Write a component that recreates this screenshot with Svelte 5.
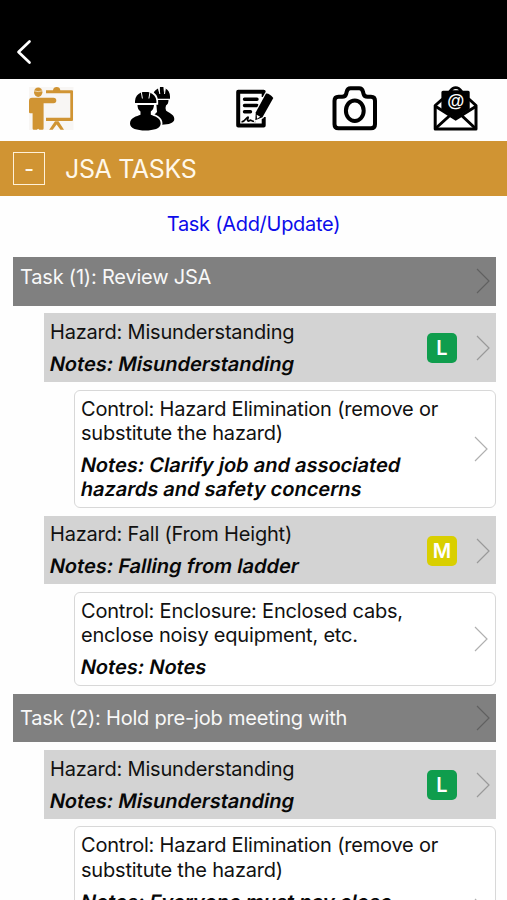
<script>
  const tasks = [
    {
      title: 'Task (1): Review JSA',
      middle: false,
      hazards: [
        {
          name: 'Hazard: Misunderstanding', notes: 'Notes: Misunderstanding', level: 'L',
          control: ['Control: Hazard Elimination (remove or', 'substitute the hazard)'],
          controlNotes: ['Notes: Clarify job and associated', 'hazards and safety concerns']
        },
        {
          name: 'Hazard: Fall (From Height)', notes: 'Notes: Falling from ladder', level: 'M',
          control: ['Control: Enclosure: Enclosed cabs,', 'enclose noisy equipment, etc.'],
          controlNotes: ['Notes: Notes']
        }
      ]
    },
    {
      title: 'Task (2): Hold pre-job meeting with',
      middle: true,
      hazards: [
        {
          name: 'Hazard: Misunderstanding', notes: 'Notes: Misunderstanding', level: 'L', tall: true,
          control: ['Control: Hazard Elimination (remove or', 'substitute the hazard)'],
          controlNotes: ['Notes: Everyone must pay close']
        }
      ]
    }
  ];
</script>

{#snippet chevron()}
  <svg class="chev" width="14" height="26" viewBox="0 0 14 26"><path d="M1 1L13 13L1 25" fill="none" stroke="currentColor" stroke-width="1.2" /></svg>
{/snippet}

<div class="app">
  <header>
    <svg width="16" height="26" viewBox="0 0 16 26"><path d="M13.5 2.5L2.5 13L13.5 23.5" fill="none" stroke="#fff" stroke-width="2.7" stroke-linecap="round" stroke-linejoin="round" /></svg>
  </header>

  <nav>
    <div class="tab">
      <svg width="48" height="48" viewBox="0 0 48 48">
        <rect x="2" y="2" width="44.500" height="43" fill="#f8f6f4" />
        <g fill="#d09433">
          <ellipse cx="11.200" cy="7.200" rx="4.200" ry="4.800" />
          <path d="M5 12.700H26.500a2.800 2.800 0 0 1 0 5.600H16.600V43.500q0 1.200-1.200 1.200H12.500l-1.400-1-1.300 1H6.800q-1.200 0-1.200-1.200V28.300H3.200q-1.200 0-1.200-1.200V16Q2 12.700 5 12.700Z" />
          <path d="M26 5.300q.5-3.300 3.700-3.300t3.600 3.300H45q1 0 1 1V35q0 1-1 1H19v-3.300h24.300V8.300H19v-3Z" />
          <path d="M28 36.300h3.500l5.500 8.400h-3.500l-3.900-5.200-3.900 5.200h-3.500Z" />
        </g>
        <path d="M7 5.800Q11.200 7.500 15.300 5.800" stroke="#f0dcb8" stroke-width=".9" fill="none" />
      </svg>
    </div>
    <div class="tab">
      <svg width="48" height="48" viewBox="0 0 48 48">
        <path d="M24.500 11.500Q25 6 30 3.500l1.300 5L32 2h3.400l.7 6.500 1.300-5q4.400 2 4.600 8v2.200H25Z" />
        <path d="M28 15h12.500q0 4-2.500 5.500-1 2.500 0 5c2 2 8.300 3.500 8.300 8.500 0 4-5.500 5.700-12.300 5.700L26 30l3-3Z" />
        <g stroke="#fff" stroke-width="3.500" paint-order="stroke">
          <path d="M9.500 20H26q-.3 4.500-3.200 6.500v3.300c3.500 1.500 9.900 2.800 9.900 8.700 0 5-7 7-15.300 7S2 43.500 2 38.500c0-5.900 7-7.200 10.500-8.700v-3.300Q9.500 24.500 9.500 20Z" />
          <path d="M7 18v-2.200q.5-6 6-8.300L15 7h5l1.800.5q6 2.300 6.600 8.300V18Z" />
        </g>
        <path d="M7 19.200h21" stroke="#fff" stroke-width="1.500" />
        <path d="M13.300 7l1.100 6.500M22 7l-1.100 6.500M31 3.500l.8 5.500M37.300 3.500l-.8 5.500" stroke="#fff" stroke-width="1" />
      </svg>
    </div>
    <div class="tab">
      <svg width="48" height="48" viewBox="0 0 48 48" fill="none" stroke="#000">
        <path d="M33.700 12V6.800H8.200v33.800h25.500V32" stroke-width="4" stroke-linejoin="round" />
        <path d="M14.500 14.200h12.500M14.500 20.500h12.500M14.500 26.800h6" stroke-width="3.400" stroke-linecap="round" />
        <path d="M11.500 37c4-.5 5.500-5.500 6.500-5s-1.500 3.500 0 4 2-1.500 3-.7 2 1.200 4.500 1.200" stroke-width="1.700" />
        <path d="M25.300 35.300l.5-8L36 8.500q3.500-.5 7.300 4.500L32.500 32.300Z" fill="#000" stroke="#fff" stroke-width="2.400" paint-order="stroke" />
        <path d="M26.700 29.800l3.500 2-3.200 1.900Z" fill="#fff" stroke="none" />
      </svg>
    </div>
    <div class="tab">
      <svg width="48" height="48" viewBox="0 0 48 48" fill="none" stroke="#000" stroke-width="4">
        <path d="M7.500 11.700h3.700q3.300 0 4-3l.5-2Q16.500 3.300 19.500 3.300h8.700q3 0 3.800 3.400l.5 2q.7 3 4 3h3.500q4 0 4 4v23.600q0 4-4 4H7.500q-4 0-4-4V15.700q0-4 4-4Z" />
        <ellipse cx="23.800" cy="25.700" rx="8.900" ry="10.300" />
      </svg>
    </div>
    <div class="tab">
      <svg width="48" height="48" viewBox="0 0 48 48">
        <path d="M3.200 20.500L9.400 15 24 6l14 9 6 5.500V44H3.200Z" fill="#fff" stroke="#000" stroke-width="3" stroke-linejoin="round" />
        <path d="M4 43L19.500 29M43 43L28 29" stroke="#000" stroke-width="3" />
        <path d="M3 21L23.700 34 44.500 21" fill="none" stroke="#000" stroke-width="3" />
        <path d="M11 5.700h5.500q3.500-4.400 7.200-4.400t7.200 4.400h5.300q1.500 0 1.500 1.500V24L23.700 33 9.400 24V7.200q0-1.500 1.600-1.500Z" />
        <path d="M20.500 5.200q3.500-2.400 6.500 0Z" fill="#fff" />
        <text x="23.700" y="22" text-anchor="middle" class="at">@</text>
      </svg>
    </div>
  </nav>

  <div class="section">
    <span class="toggle">-</span>
    <h1>JSA TASKS</h1>
  </div>

  <div class="add"><span>Task (Add/Update)</span></div>

  <main>
    {#each tasks as task}
      <div class="task" class:middle={task.middle}>
        <span>{task.title}</span>
        {@render chevron()}
      </div>
      {#each task.hazards as h}
        <div class="hazard">
          <div class="copy">
            <p><span>{h.name}</span></p>
            <p class="notes"><span class="line">{h.notes}</span></p>
          </div>
          <b class="badge" class:medium={h.level === 'M'}>{h.level}</b>
          {@render chevron()}
        </div>
        <div class="control" class:tall={h.tall}>
          <div class="copy">
            <p>{#each h.control as line}<span class="line">{line}</span>{/each}</p>
            <p class="notes">{#each h.controlNotes as line}<span class="line">{line}</span>{/each}</p>
          </div>
          {@render chevron()}
        </div>
      {/each}
    {/each}
  </main>
</div>

<style>
  .app {
    width: 507px;
    height: 900px;
    overflow: hidden;
    background: #fefefe;
    color: #111;
    font-family: Inter, "Liberation Sans", sans-serif;
    font-size: 20px;
    line-height: 24.4px;
    letter-spacing: -0.2px;
  }
  header {
    box-sizing: border-box;
    height: 79px;
    padding: 39px 0 0 16px;
    background: #000;
  }
  header svg, .tab svg, .chev { display: block; flex: none; }
  nav {
    display: flex;
    height: 62px;
    background: #fefefe;
  }
  .tab {
    flex: 1;
    display: flex;
    justify-content: center;
    padding-top: 6px;
  }
  .at {
    font: bold 17.500px "Liberation Sans", sans-serif;
    fill: #fff;
    letter-spacing: 0;
  }
  .section {
    display: flex;
    align-items: center;
    height: 55px;
    padding-left: 13px;
    gap: 20px;
    background: #d09433;
    color: #fff8ea;
  }
  .toggle {
    box-sizing: border-box;
    width: 32px;
    height: 33px;
    border: 1.5px solid #fff1d8;
    text-align: center;
    font-size: 21px;
    font-weight: 500;
    line-height: 32px;
  }
  h1 {
    margin: 0;
    padding-top: 2px;
    font-size: 25px;
    font-weight: 400;
    letter-spacing: -0.35px;
  }
  .add {
    height: 61px;
    line-height: 56px;
    text-align: center;
    color: #0c0cea;
    letter-spacing: -0.28px;
  }
  main {
    display: flex;
    flex-direction: column;
    gap: 7.700px;
    padding: 0 11px 0 13px;
  }
  .task, .hazard, .control {
    box-sizing: border-box;
    flex: none;
    display: flex;
    align-items: center;
  }
  .task {
    height: 48.700px;
    padding: 0 6px 0 7px;
    justify-content: space-between;
    background: #808080;
    color: #f8f8f8;
  }
  .task > span { padding-bottom: 9px; }
  .task.middle > span { padding-bottom: 0; }
  .task .chev { color: #606060; }
  .hazard {
    height: 68.600px;
    margin-left: 31px;
    padding: 1px 6px 0;
    background: #d3d3d3;
  }
  .copy { flex: 1; }
  p { margin: 0; white-space: nowrap; }
  .notes {
    margin-top: 7.600px;
    color: #080808;
    font-weight: 600;
  }
  .line { display: table; }
  /* slanted upright letterforms keep the two-storey "a" */
  .notes .line {
    transform: skewX(-11deg);
    letter-spacing: 0.010px;
  }
  .badge {
    width: 30px;
    height: 30px;
    margin-right: 19px;
    border-radius: 5px;
    background: #0f9d4d;
    color: #fff;
    font-size: 20px;
    font-weight: 600;
    line-height: 31px;
    text-align: center;
    letter-spacing: 0;
  }
  .badge.medium { background: #d9cf00; }
  .chev { color: #999; }
  .control {
    margin-left: 61px;
    padding: 6px 7px 5.200px 6px;
    border: 1px solid #d8d8d8;
    border-radius: 6px;
    background: #fff;
  }
  .control.tall { height: 168px; }
  .control.tall .copy { align-self: flex-start; }
  .control .chev { color: #b0b0b0; }
</style>
